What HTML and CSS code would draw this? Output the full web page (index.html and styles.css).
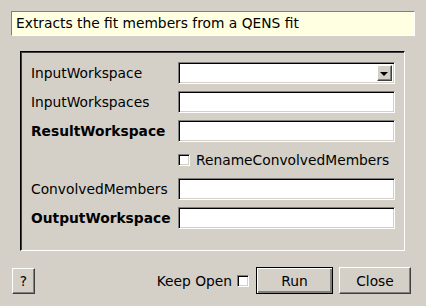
FILE: index.html
```html
<!DOCTYPE html>
<html lang="en">
<head>
    <meta charset="UTF-8">
    <title>ExtractQENSMembers</title>
    <link rel="stylesheet" href="styles.css">
</head>
<body>
    <div class="dialog">
        <div class="description">Extracts the fit members from a QENS fit</div>

        <div class="frame">
            <div class="form">
                <label class="label">InputWorkspace</label>
                <div class="field combo">
                    <span class="combo-btn"><span class="arrow"></span></span>
                </div>

                <label class="label">InputWorkspaces</label>
                <div class="field"></div>

                <label class="label bold">ResultWorkspace</label>
                <div class="field"></div>

                <span></span>
                <div class="check-row">
                    <span class="checkbox"></span>
                    <span>RenameConvolvedMembers</span>
                </div>

                <label class="label">ConvolvedMembers</label>
                <div class="field"></div>

                <label class="label bold">OutputWorkspace</label>
                <div class="field"></div>
            </div>
        </div>

        <div class="buttons">
            <button class="btn help">?</button>
            <div class="spacer"></div>
            <span class="keep">Keep Open</span>
            <span class="checkbox keep-box"></span>
            <button class="btn run">Run</button>
            <button class="btn close">Close</button>
        </div>
    </div>
</body>
</html>
```

FILE: styles.css
```css
html, body {
    margin: 0;
    padding: 0;
    background-color: #d4d0c8;
}
body {
    font-family: "DejaVu Sans", sans-serif;
    font-size: 13.8px;
    color: #000;
}
.dialog {
    width: 426px;
    height: 306px;
    box-sizing: border-box;
    padding: 11px 11px 0 11px;
    display: flex;
    flex-direction: column;
}
.description {
    height: 25px;
    box-sizing: border-box;
    background-color: #ffffe1;
    border-top: 1px solid #808080;
    border-left: 1px solid #808080;
    border-right: 1px solid #fff;
    border-bottom: 1px solid #fff;
    padding: 0 0 0 4px;
    line-height: 23px;
}
.frame {
    margin: 15px 10px 0 9px;
    height: 200px;
    box-sizing: border-box;
    border-top: 1px solid #000;
    border-left: 1px solid #000;
    border-right: 1px solid #fff;
    border-bottom: 1px solid #fff;
    box-shadow: inset 1px 1px 0 #404040;
    padding: 10px 8px 0 10px;
}
.form {
    display: grid;
    grid-template-columns: 147px 217px;
    grid-auto-rows: 22px;
    row-gap: 7px;
    align-items: center;
}
.label {
    white-space: nowrap;
}
.bold {
    font-weight: bold;
}
.field {
    height: 22px;
    box-sizing: border-box;
    background: #fff;
    border-top: 1px solid #808080;
    border-left: 1px solid #808080;
    border-right: 1px solid #fff;
    border-bottom: 1px solid #fff;
    box-shadow: inset 1px 1px 0 #000, inset -1px -1px 0 #d4d0c8;
    position: relative;
}
.combo-btn {
    position: absolute;
    right: 2px;
    top: 2px;
    width: 15px;
    height: 16px;
    box-sizing: border-box;
    background: #d4d0c8;
    border-top: 1px solid #fff;
    border-left: 1px solid #fff;
    border-right: 1px solid #404040;
    border-bottom: 1px solid #404040;
    box-shadow: inset -1px -1px 0 #808080;
    display: flex;
    align-items: center;
    justify-content: center;
}
.arrow {
    width: 0;
    height: 0;
    border-left: 4px solid transparent;
    border-right: 4px solid transparent;
    border-top: 4px solid #000;
    margin: 1px 1px 0 0;
}
.check-row {
    display: flex;
    align-items: center;
    gap: 6px;
    height: 22px;
}
.checkbox {
    display: inline-block;
    width: 12px;
    height: 12px;
    box-sizing: border-box;
    background: #fff;
    border-top: 1px solid #808080;
    border-left: 1px solid #808080;
    border-right: 1px solid #fff;
    border-bottom: 1px solid #fff;
    box-shadow: inset 1px 1px 0 #000, inset -1px -1px 0 #d4d0c8;
}
.buttons {
    display: flex;
    align-items: center;
    margin: 16px 4px 0 1px;
    height: 27px;
}
.spacer {
    flex: 1;
}
.btn {
    font-family: "DejaVu Sans", sans-serif;
    font-size: 13.8px;
    color: #000;
    background: #d4d0c8;
    height: 27px;
    box-sizing: border-box;
    border-top: 1px solid #fff;
    border-left: 1px solid #fff;
    border-right: 1px solid #404040;
    border-bottom: 1px solid #404040;
    box-shadow: inset -1px -1px 0 #808080;
    padding: 0;
}
.help {
    width: 23px;
    height: 26px;
    margin-top: 1px;
}
.keep {
    margin-right: 5px;
}
.keep-box {
    margin-right: 7px;
}
.run {
    width: 77px;
    border: 1px solid #000;
    box-shadow: inset 1px 1px 0 #fff, inset -2px -2px 0 #808080;
    margin-right: 6px;
}
.close {
    width: 72px;
}
```
